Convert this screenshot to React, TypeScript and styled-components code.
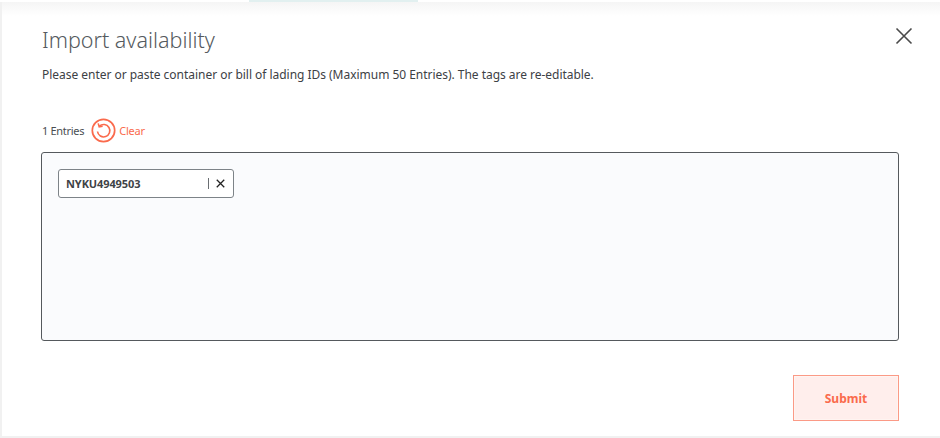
import { createGlobalStyle } from "styled-components";
import styled from "styled-components";

const GlobalStyle = createGlobalStyle`
  html, body {
    margin: 0;
    padding: 0;
    background: #fff;
  }
  body {
    font-family: "Noto Sans", "Liberation Sans", sans-serif;
  }
`;

const Page = styled.div`
  width: 940px;
  height: 438px;
  display: flex;
  flex-direction: column;
  overflow: hidden;
  background: #f1f1f1;
`;

const TopStrip = styled.div`
  height: 2px;
  flex: none;
  display: flex;
  padding-left: 249px;
  background: #fff;
`;

const ActiveTab = styled.div`
  width: 169px;
  background: #e2f0f0;
`;

const Modal = styled.div`
  flex: 1;
  margin: 0 0 2px 2px;
  padding: 0 41px 0 39px;
  display: flex;
  flex-direction: column;
  background: linear-gradient(#f5f5f5 0, #fff 14px);
`;

const TitleRow = styled.div`
  height: 64px;
  display: flex;
  justify-content: space-between;
  align-items: flex-end;
  flex: none;
`;

const Title = styled.h1`
  margin: 0 0 12px 1px;
  font-size: 21.5px;
  line-height: 28px;
  font-weight: 300;
  color: #555a5e;
`;

const CloseButton = styled.button`
  border: 0;
  background: none;
  padding: 0;
  margin: 0 -14px 21px 0;
  width: 18px;
  height: 18px;
  color: #4a4a4a;
  display: flex;
`;

const Description = styled.p`
  margin: 0 0 0 1px;
  font-size: 12px;
  line-height: 17px;
  letter-spacing: -0.03px;
  color: #3d4145;
`;

const EntriesRow = styled.div`
  margin-top: 34px;
  height: 26px;
  display: flex;
  align-items: center;
  gap: 7px;
  padding-left: 1px;
`;

const EntryCount = styled.span`
  font-size: 11px;
  letter-spacing: -0.3px;
  color: #4a4e52;
`;

const ClearButton = styled.button`
  border: 0;
  background: none;
  padding: 0;
  display: flex;
  align-items: center;
  gap: 3px;
  font: inherit;
  font-size: 11px;
  letter-spacing: -0.2px;
  color: #fa6a4c;
`;

const TagBox = styled.div`
  margin-top: 9px;
  height: 189px;
  box-sizing: border-box;
  padding: 16px;
  background: #fafbfd;
  border: 1px solid #55595d;
  border-radius: 3px;
`;

const Tag = styled.div`
  width: 176px;
  height: 29px;
  box-sizing: border-box;
  padding: 0 7px;
  display: flex;
  align-items: center;
  background: #fff;
  border: 1px solid #7d8388;
  border-radius: 3px;
`;

const TagLabel = styled.span`
  flex: 1;
  font-size: 11px;
  font-weight: 700;
  letter-spacing: -0.1px;
  color: #3f4347;
`;

const TagDivider = styled.span`
  width: 1px;
  height: 11px;
  background: #6a6e72;
  margin-right: 7px;
`;

const TagRemove = styled.button`
  border: 0;
  background: none;
  padding: 0;
  width: 9px;
  height: 9px;
  margin-right: 1px;
  display: flex;
  color: #222;
  stroke-width: 2.6;
`;

const Footer = styled.div`
  margin-top: 34px;
  display: flex;
  justify-content: flex-end;
`;

const SubmitButton = styled.button`
  width: 106px;
  height: 46px;
  background: #ffeeec;
  border: 1px solid #fb9a86;
  box-shadow: inset 0 0 0 1px #fff4f1;
  font: inherit;
  font-size: 12px;
  font-weight: 700;
  color: #fa6a4c;
`;

const CrossIcon = ({ weight = 1.6 }: { weight?: number }) => (
  <svg width="100%" height="100%" viewBox="0 0 18 18" fill="none" stroke="currentColor" strokeWidth={weight}>
    <path d="M1.5 1.5l15 15M16.5 1.5l-15 15" />
  </svg>
);

const ResetIcon = () => (
  <svg width="25" height="25" viewBox="0 0 25 25" fill="none" stroke="#fa6a4c">
    <circle cx="12.5" cy="12.5" r="11.2" strokeWidth="1.7" />
    <path d="M8.4 8.2a6.2 6.2 0 1 1-1.9 5.3" strokeWidth="1.6" />
    <path d="M7.2 5.4l1 3.5 3.4-.8" strokeWidth="1.6" />
  </svg>
);

export default function App() {
  return (
    <Page>
      <GlobalStyle />
      <TopStrip>
        <ActiveTab />
      </TopStrip>
      <Modal>
        <TitleRow>
          <Title>Import availability</Title>
          <CloseButton aria-label="Close">
            <CrossIcon />
          </CloseButton>
        </TitleRow>
        <Description>
          Please enter or paste container or bill of lading IDs (Maximum 50 Entries). The tags are re-editable.
        </Description>
        <EntriesRow>
          <EntryCount>1 Entries</EntryCount>
          <ClearButton>
            <ResetIcon />
            Clear
          </ClearButton>
        </EntriesRow>
        <TagBox>
          <Tag>
            <TagLabel>NYKU4949503</TagLabel>
            <TagDivider />
            <TagRemove aria-label="Remove">
              <CrossIcon weight={2.6} />
            </TagRemove>
          </Tag>
        </TagBox>
        <Footer>
          <SubmitButton>Submit</SubmitButton>
        </Footer>
      </Modal>
    </Page>
  );
}
